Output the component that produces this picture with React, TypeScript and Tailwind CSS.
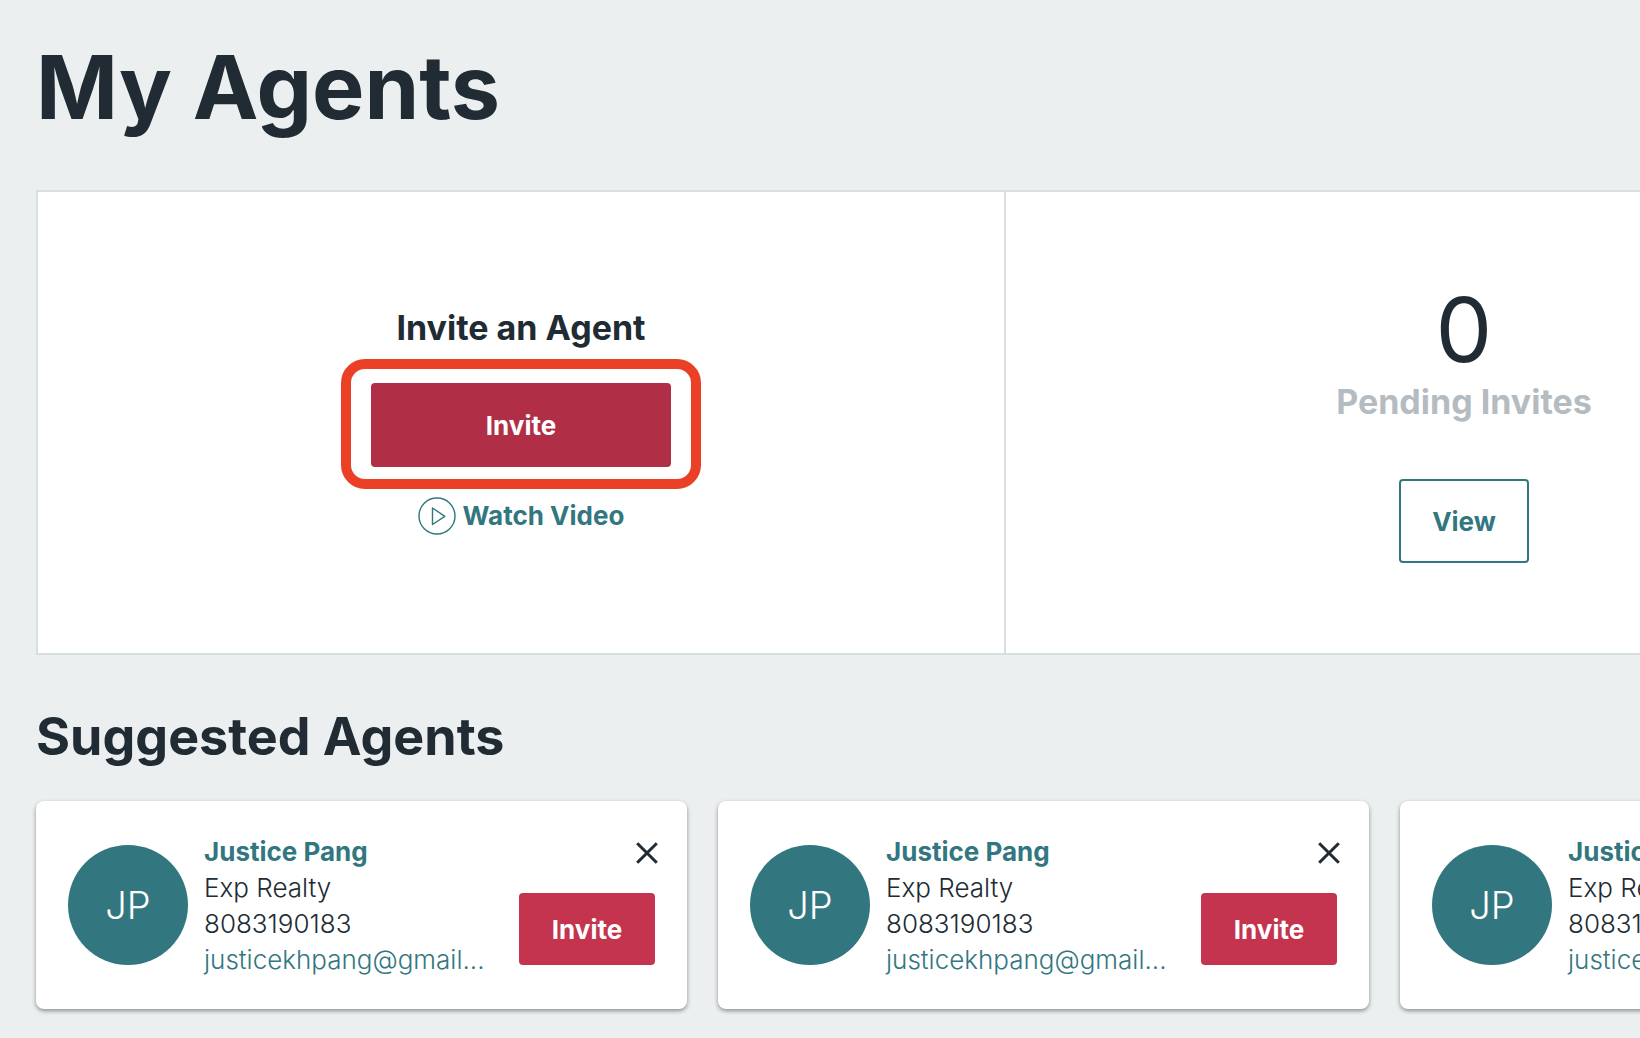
import React from "react";

type Agent = { name: string; company: string; phone: string; email: string };

const agents: Agent[] = Array.from({ length: 3 }, () => ({
  name: "Justice Pang",
  company: "Exp Realty",
  phone: "8083190183",
  email: "justicekhpang@gmail...",
}));

function initials(name: string) {
  return name
    .split(" ")
    .map((part) => part[0])
    .join("");
}

function PlayIcon() {
  return (
    <svg viewBox="0 0 38 38" className="h-[38px] w-[38px]" fill="none" stroke="currentColor" aria-hidden="true">
      <circle cx="19" cy="19" r="18" strokeWidth="1.4" />
      <path d="M14.5 11v16.5L26.8 19.3Z" strokeWidth="1.4" strokeLinejoin="round" />
    </svg>
  );
}

function CloseIcon() {
  return (
    <svg viewBox="0 0 22 22" className="h-[22px] w-[22px]" fill="none" stroke="currentColor" strokeWidth="3" aria-hidden="true">
      <path d="M1.2 1.2l19.6 19.6M20.8 1.2L1.2 20.8" />
    </svg>
  );
}

function AgentCard({ agent }: { agent: Agent }) {
  return (
    <li className="flex h-[208px] w-[651px] shrink-0 rounded-lg bg-white px-8 shadow-[0_2px_4px_rgba(0,0,0,0.4)]">
      <div className="mt-11 flex h-[120px] w-[120px] shrink-0 items-center justify-center rounded-full bg-[#32777f] text-[38px] font-light text-white">
        {initials(agent.name)}
      </div>
      <div className="mt-[33px] ml-4 min-w-0 flex-1 text-[26px] leading-9 font-light whitespace-nowrap">
        <a href="#agent" className="block font-bold text-[#32777f]">
          {agent.name}
        </a>
        <p>{agent.company}</p>
        <p>{agent.phone}</p>
        <a href="#email" className="block text-[#32777f]">
          {agent.email}
        </a>
      </div>
      <div className="flex shrink-0 flex-col items-end pt-[41px]">
        <button type="button" aria-label="Dismiss" className="-mr-[3px]">
          <CloseIcon />
        </button>
        <button type="button" className="mt-[29px] h-[72px] w-[136px] rounded bg-[#c4344e] text-[26px] font-bold text-white">
          Invite
        </button>
      </div>
    </li>
  );
}

export default function App() {
  return (
    <main className="min-h-screen overflow-x-hidden bg-[#ebeff0] pt-8 pb-7 pl-9 font-['Inter','Open_Sans',sans-serif] text-[#212b34]">
      <h1 className="text-[88px] leading-[110px] font-bold">My Agents</h1>

      <section className="mt-12 grid w-max grid-cols-[968px_916px] border-2 border-[#d7dfe2] bg-white">
        <div className="flex h-[461px] flex-col items-center border-r-2 border-[#d7dfe2] pt-[114px]">
          <h2 className="text-[34px] leading-11 font-bold">Invite an Agent</h2>
          <div className="relative mt-[33px]">
            <button type="button" className="block h-[84px] w-[300px] rounded bg-[#b12f46] text-[26px] font-bold text-white">
              Invite
            </button>
            <div className="pointer-events-none absolute -inset-x-[30px] -top-6 -bottom-[22px] rounded-3xl border-10 border-[#ea4025]" />
          </div>
          <a href="#video" className="mt-[30px] flex items-center gap-[7px] text-[26px] leading-9 font-bold text-[#32777f]">
            <PlayIcon />
            Watch Video
          </a>
        </div>
        <div className="flex flex-col items-center pt-[86px]">
          <p className="text-[90px] leading-[104px]">0</p>
          <p className="text-[34px] leading-10 font-bold text-[#b5bcc1]">Pending Invites</p>
          <button type="button" className="mt-[57px] h-[84px] w-[130px] rounded border-2 border-[#32777f] text-[26px] font-bold text-[#32777f]">
            View
          </button>
        </div>
      </section>

      <h2 className="mt-12 text-[52px] leading-[68px] font-bold">Suggested Agents</h2>
      <ul className="mt-[30px] flex gap-[31px]">
        {agents.map((agent, index) => (
          <AgentCard key={index} agent={agent} />
        ))}
      </ul>
    </main>
  );
}
